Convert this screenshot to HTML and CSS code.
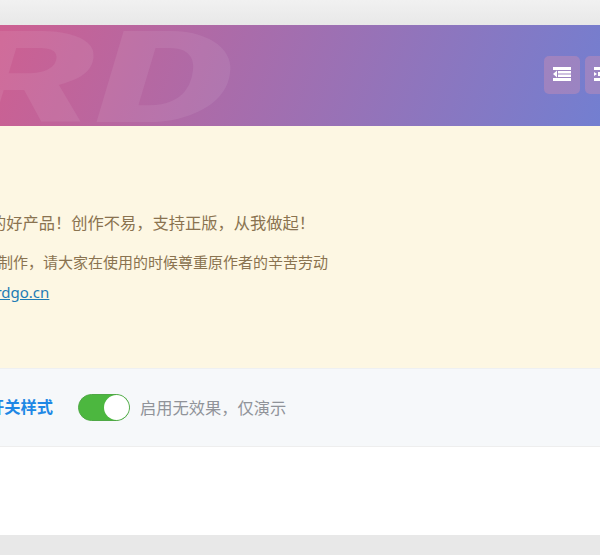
FILE: index.html

```html
<!DOCTYPE html>
<html lang="zh-CN">
<head>
    <meta charset="UTF-8">
    <title>开关样式</title>
    <link rel="stylesheet" href="styles.css">
</head>
<body>

<div class="card">
    <header class="banner">
        <span class="watermark">RD</span>
        <div class="tools">
            <button class="tool">
                <svg width="18" height="15" viewBox="0 0 18 15"><path d="M0 0h18v3H0zM5 4h13v2.500H5zM5 7.500h13V10H5zM0 11h18v3H0zM4 3.500v7L0 7z" fill="#fff"/></svg>
            </button>
            <button class="tool">
                <svg width="18" height="15" viewBox="0 0 18 15"><path d="M0 0h18v3H0zM4 5h14v4H4zM0 11h18v3H0zM0 5l3 2-3 2z" fill="#fff"/></svg>
            </button>
        </div>
    </header>

    <section class="notice">
        <p class="notice-title">这是一款用心制作的好产品！创作不易，支持正版，从我做起！</p>
        <p class="notice-text">本模板由原作者倾力制作，请大家在使用的时候尊重原作者的辛苦劳动</p>
        <p class="notice-link">官方网站：<a href="#">www.cardgo.cn</a></p>
    </section>

    <div class="demo-row">
        <span class="demo-label">开关样式</span>
        <span class="switch"><span class="knob"></span></span>
        <span class="demo-hint">启用无效果，仅演示</span>
    </div>
</div>

</body>
</html>
```

FILE: styles.css

```css
html, body {
    height: 100%;
}
body {
    margin: 0;
    overflow: hidden;
    background: linear-gradient(#f1f1f1, #e8e8e8 25px);
    font-family: "Noto Sans", "Noto Sans CJK SC", sans-serif;
    padding-top: 25px;
    box-sizing: border-box;
}
.card {
    width: 900px;
    height: 510px;
    margin-left: -200px;
    background-color: #fff;
}
.banner {
    position: relative;
    height: 101px;
    overflow: hidden;
    display: flex;
    justify-content: flex-end;
    align-items: center;
    background: linear-gradient(110deg, #cf5f90 20%, #6f80d3 92%);
}
.watermark {
    position: absolute;
    left: 157px;
    top: -23px;
    font-family: Roboto, sans-serif;
    font-size: 128px;
    font-weight: 900;
    font-style: italic;
    line-height: 1.2;
    color: rgba(255, 255, 255, 0.08);
    transform: scaleX(1.72);
    transform-origin: left top;
}
.tools {
    display: flex;
    gap: 5px;
    margin-right: 79px;
    margin-top: -2px;
}
.tool {
    width: 36px;
    height: 38px;
    padding: 0;
    border: none;
    border-radius: 5px;
    background-color: rgba(240, 150, 170, 0.3);
    display: flex;
    align-items: center;
    justify-content: center;
}
.notice {
    height: 242px;
    box-sizing: border-box;
    padding: 84px 0 0 60px;
    background-color: #fdf7e3;
    color: #8a7350;
}
.notice p {
    margin: 0;
}
.notice-title {
    font-size: 16.25px;
    line-height: 26px;
}
.notice-text {
    font-size: 15px;
    line-height: 24px;
    margin: 14px 0 0 3px !important;
}
.notice-link {
    font-size: 15px;
    line-height: 24px;
    margin: 6px 0 0 0 !important;
}
.notice-link a {
    margin-left: 6px;
    color: #1f7cb5;
}
.demo-row {
    height: 79px;
    box-sizing: border-box;
    display: flex;
    align-items: center;
    padding-left: 188px;
    background-color: #f6f8fa;
    border-top: 1px solid #eef0f2;
    border-bottom: 1px solid #eee;
}
.demo-label {
    font-size: 16.25px;
    font-weight: 700;
    color: #1e88e5;
    width: 90px;
    margin-top: -3px;
}
.switch {
    width: 52px;
    height: 27px;
    box-sizing: border-box;
    border-radius: 14px;
    background-color: #4cb73f;
    border: 1px solid #4fa845;
    display: flex;
    justify-content: flex-end;
    margin-right: 10px;
}
.knob {
    width: 25px;
    height: 25px;
    border-radius: 50%;
    background-color: #fff;
}
.demo-hint {
    font-size: 16.25px;
    color: #909399;
    margin-top: -2px;
}
```
